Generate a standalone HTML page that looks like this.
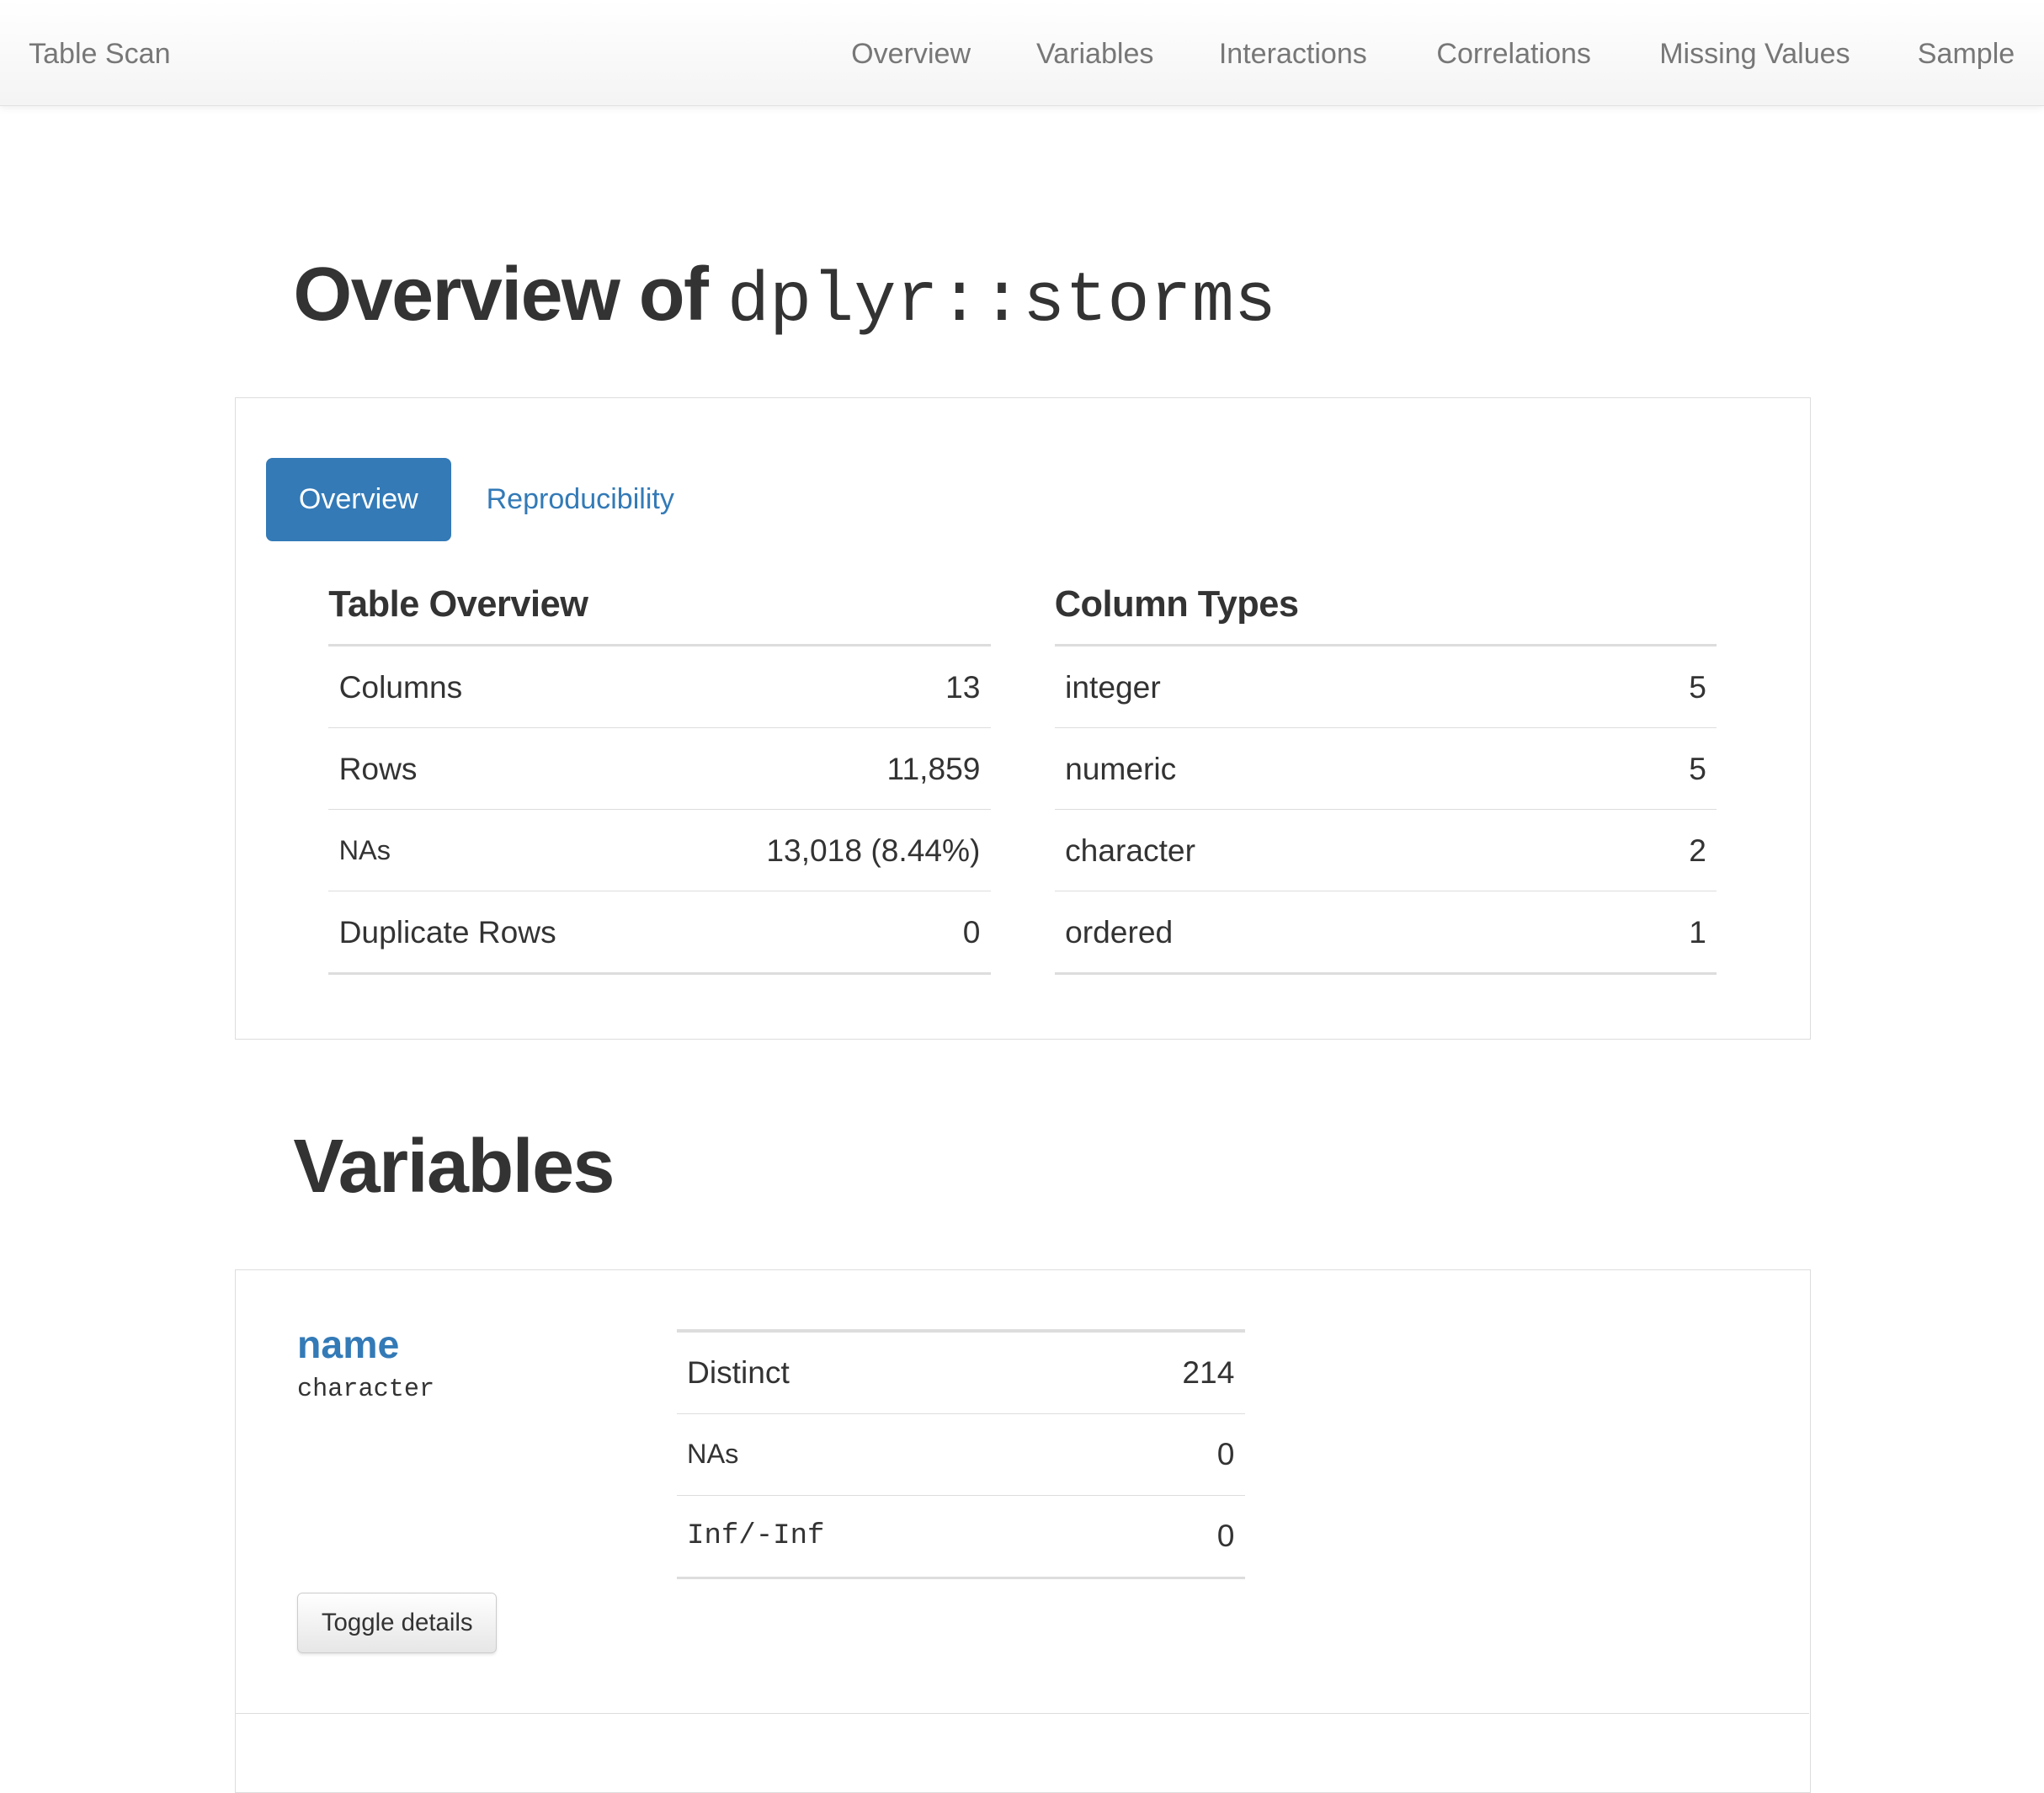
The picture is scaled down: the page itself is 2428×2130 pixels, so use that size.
<!DOCTYPE html>
<html><head><meta charset="utf-8">
<style>
html,body{margin:0;padding:0;background:#fff;}
body{width:1568px;height:1334px;overflow:hidden;zoom:1.54847;font-family:"Liberation Sans",Helvetica,Arial,sans-serif;color:#333;position:relative;}
.nav{position:absolute;left:0;top:0;width:1568px;height:81px;background:linear-gradient(#fff,#f4f4f4);border-bottom:1px solid #e2e2e2;box-shadow:0 1px 6px rgba(0,0,0,0.08);}
.nav span{position:absolute;top:29px;font-size:22px;color:#777;white-space:nowrap;}
.abs{position:absolute;white-space:nowrap;}
h1{margin:0;font-weight:bold;font-size:58px;color:#333;letter-spacing:-1px;}
.mono{font-family:"Liberation Mono","DejaVu Sans Mono",monospace;}
.panel{position:absolute;border:1px solid #ddd;background:#fff;}
.btn{position:absolute;left:204px;top:351px;width:142px;height:64px;background:#337ab7;border-radius:5px;color:#fff;font-size:22px;line-height:64px;text-align:center;}
.link{color:#337ab7;}
table{position:absolute;border-collapse:collapse;font-size:24px;}
td{height:62px;border-bottom:1px solid #ddd;padding:0 8px;}
td.r{text-align:right;}
tr:last-child td{border-bottom:2px solid #ddd;}
.h3{position:absolute;font-size:28px;font-weight:bold;color:#333;letter-spacing:-0.3px;}
.hr{position:absolute;height:2px;background:#ddd;}
.small{font-size:21px;}
.tog{position:absolute;left:228px;top:1222px;width:152px;height:45px;border:1px solid #ccc;border-radius:4px;background:linear-gradient(#fff,#e6e6e6);box-shadow:0 1px 2px rgba(0,0,0,0.1);font-size:19px;line-height:45px;text-align:center;color:#333;}
</style></head><body>
<div class="nav">
<span style="left:22px">Table Scan</span>
<span style="left:653px">Overview</span>
<span style="left:795px">Variables</span>
<span style="left:935px">Interactions</span>
<span style="left:1102px">Correlations</span>
<span style="left:1273px">Missing Values</span>
<span style="left:1471px">Sample</span>
</div>
<h1 class="abs" style="left:225px;top:193px">Overview of <span class="mono" style="font-size:54px;letter-spacing:0;font-weight:normal">dplyr::storms</span></h1>
<div class="panel" style="left:180px;top:305px;width:1208px;height:491px"></div>
<div class="btn">Overview</div>
<div class="abs link" style="left:373px;top:371px;font-size:22px">Reproducibility</div>
<div class="h3" style="left:252px;top:448px">Table Overview</div>
<div class="hr" style="left:252px;top:494px;width:508px"></div>
<table style="left:252px;top:496px;width:508px">
<tr><td>Columns</td><td class="r">13</td></tr>
<tr><td>Rows</td><td class="r">11,859</td></tr>
<tr><td class="small">NAs</td><td class="r">13,018 (8.44%)</td></tr>
<tr><td>Duplicate Rows</td><td class="r">0</td></tr>
</table>
<div class="h3" style="left:809px;top:448px">Column Types</div>
<div class="hr" style="left:809px;top:494px;width:508px"></div>
<table style="left:809px;top:496px;width:508px">
<tr><td>integer</td><td class="r">5</td></tr>
<tr><td>numeric</td><td class="r">5</td></tr>
<tr><td>character</td><td class="r">2</td></tr>
<tr><td>ordered</td><td class="r">1</td></tr>
</table>
<h1 class="abs" style="left:225px;top:862px">Variables</h1>
<div class="panel" style="left:180px;top:974px;width:1208px;height:400px"></div>
<div class="abs" style="left:181px;top:1314px;width:1207px;height:1px;background:#ddd"></div>
<div class="abs link" style="left:228px;top:1014px;font-size:30px;font-weight:bold">name</div>
<div class="abs mono" style="left:228px;top:1055px;font-size:19.5px">character</div>
<div class="hr" style="left:519px;top:1020px;width:436px"></div>
<table style="left:519px;top:1022px;width:436px">
<tr><td>Distinct</td><td class="r">214</td></tr>
<tr><td class="small">NAs</td><td class="r">0</td></tr>
<tr><td class="mono" style="font-size:22px">Inf/-Inf</td><td class="r">0</td></tr>
</table>
<div class="tog">Toggle details</div>
</body></html>
